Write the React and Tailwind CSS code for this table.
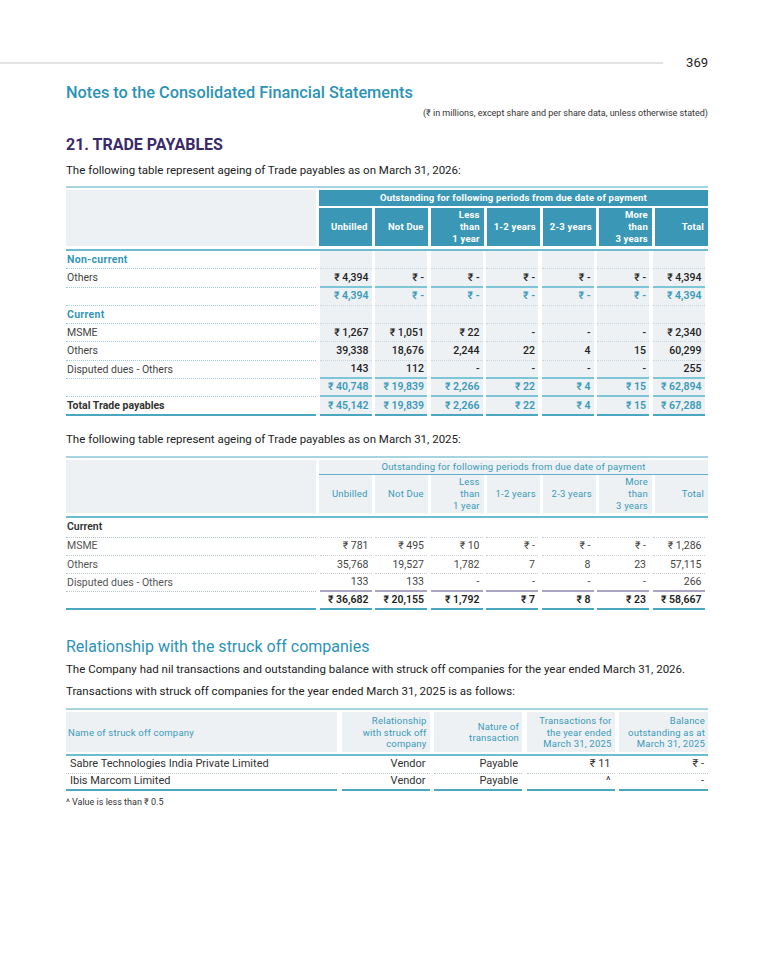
import React from "react";

const heads = [
  ["Unbilled"],
  ["Not Due"],
  ["Less", "than", "1 year"],
  ["1-2 years"],
  ["2-3 years"],
  ["More", "than", "3 years"],
  ["Total"],
];

const t1 = [
  { label: "Non-current", type: "section" },
  { label: "Others", vals: ["₹ 4,394", "₹ -", "₹ -", "₹ -", "₹ -", "₹ -", "₹ 4,394"], nextSub: true },
  { label: "", vals: ["₹ 4,394", "₹ -", "₹ -", "₹ -", "₹ -", "₹ -", "₹ 4,394"], type: "sub" },
  { label: "Current", type: "section" },
  { label: "MSME", vals: ["₹ 1,267", "₹ 1,051", "₹ 22", "-", "-", "-", "₹ 2,340"] },
  { label: "Others", vals: ["39,338", "18,676", "2,244", "22", "4", "15", "60,299"] },
  { label: "Disputed dues - Others", vals: ["143", "112", "-", "-", "-", "-", "255"], nextSub: true },
  { label: "", vals: ["₹ 40,748", "₹ 19,839", "₹ 2,266", "₹ 22", "₹ 4", "₹ 15", "₹ 62,894"], type: "sub", nextSub: true },
  { label: "Total Trade payables", vals: ["₹ 45,142", "₹ 19,839", "₹ 2,266", "₹ 22", "₹ 4", "₹ 15", "₹ 67,288"], type: "total" },
];

const t2 = [
  { label: "Current", type: "section" },
  { label: "MSME", vals: ["₹ 781", "₹ 495", "₹ 10", "₹ -", "₹ -", "₹ -", "₹ 1,286"] },
  { label: "Others", vals: ["35,768", "19,527", "1,782", "7", "8", "23", "57,115"] },
  { label: "Disputed dues - Others", vals: ["133", "133", "-", "-", "-", "-", "266"], nextSub: true },
  { label: "", vals: ["₹ 36,682", "₹ 20,155", "₹ 1,792", "₹ 7", "₹ 8", "₹ 23", "₹ 58,667"], type: "total" },
];

function HeadCell({ lines, solid }) {
  return (
    <div
      className={
        "h-[38px] flex items-center justify-end text-right pr-[4px] text-[9.5px] leading-[12px] tracking-[0.2px] " +
        (solid ? "bg-[#3a97b5] text-white font-bold" : "bg-[#edf1f4] text-[#3a9ab8]")
      }
    >
      <div>
        {lines.map((l, i) => (
          <div key={i}>{l}</div>
        ))}
      </div>
    </div>
  );
}

function Table1() {
  return (
    <div className="mt-[8px]">
      <div className="border-t-2 border-[#a6d5e1] pt-[2px]">
        <div className="flex gap-x-[3px]">
          <div className="w-[250px] bg-[#edf1f4]" />
          <div className="flex-1 flex flex-col gap-[2px]">
            <div className="h-[16px] bg-[#3a97b5] text-white font-bold text-[9.5px] tracking-[0.2px] flex items-center justify-center">
              Outstanding for following periods from due date of payment
            </div>
            <div className="grid grid-cols-7 gap-x-[3.5px]">
              {heads.map((h, i) => (
                <HeadCell key={i} lines={h} solid />
              ))}
            </div>
          </div>
        </div>
        <div className="mt-[3px] h-[2px] bg-[#6dbdd2]" />
      </div>
      <div className="grid grid-cols-[250px_repeat(7,52px)] gap-x-[3.5px]">
        {t1.map((r, ri) => (
          <React.Fragment key={ri}>
            <div
              className={
                "h-[18.3px] flex items-center pl-[1px] text-[10.5px] " +
                (r.type === "total"
                  ? "border-b-2 border-solid border-[#4aa6c1] font-bold text-[#333]"
                  : "border-b border-dotted border-[#9fcfdc] ") +
                (r.type === "section" ? "text-[#3597b6] font-bold tracking-[0.3px]" : r.type === "total" ? "" : "text-[#444]")
              }
            >
              {r.label}
            </div>
            {Array.from({ length: 7 }).map((_, ci) => {
              const v = r.vals ? r.vals[ci] : "";
              let border = "border-b border-dotted border-[#c9d7dd]";
              if (r.type === "total") border = "border-b-2 border-solid border-[#4aa6c1]";
              else if (r.nextSub) border = "border-b-2 border-solid border-[#7ec5d8]";
              const color =
                r.type === "sub" || r.type === "total" ? "text-[#3a9ab8] font-semibold" : "text-[#222] font-medium";
              return (
                <div
                  key={ci}
                  className={
                    "h-[18.3px] flex items-center justify-end pr-[3px] text-[10.5px] bg-[#edf1f4] " + border + " " + color
                  }
                >
                  {v}
                </div>
              );
            })}
          </React.Fragment>
        ))}
      </div>
    </div>
  );
}

function Table2() {
  return (
    <div className="mt-[9px]">
      <div className="border-t-2 border-[#a6d5e1] pt-[2px]">
        <div className="flex gap-x-[3px]">
          <div className="w-[250px] bg-[#edf1f4]" />
          <div className="flex-1 flex flex-col">
            <div className="h-[15px] bg-[#edf1f4] text-[#3a9ab8] text-[9.5px] tracking-[0.2px] flex items-center justify-center border-b-[1.5px] border-[#5cb3cb]">
              Outstanding for following periods from due date of payment
            </div>
            <div className="grid grid-cols-7 gap-x-[3.5px]">
              {heads.map((h, i) => (
                <HeadCell key={i} lines={h} />
              ))}
            </div>
          </div>
        </div>
        <div className="mt-[3px] h-[2px] bg-[#6dbdd2]" />
      </div>
      <div className="grid grid-cols-[250px_repeat(7,52px)] gap-x-[3.5px]">
        {t2.map((r, ri) => (
          <React.Fragment key={ri}>
            <div
              className={
                "flex items-center pl-[1px] text-[10.5px] " +
                (ri === 0 ? "h-[20px] " : "h-[18.2px] ") +
                (r.type === "total"
                  ? "border-b-2 border-solid border-[#4aa6c1]"
                  : "border-b border-dotted border-[#b9c6cc] ") +
                (r.type === "section" ? " text-[#333] font-semibold" : " text-[#555]")
              }
            >
              {r.label}
            </div>
            {Array.from({ length: 7 }).map((_, ci) => {
              const v = r.vals ? r.vals[ci] : "";
              let border = "border-b border-dotted border-[#c6cfd3]";
              if (r.type === "total") border = "border-b-2 border-solid border-[#4aa6c1]";
              else if (r.nextSub) border = "border-b-2 border-solid border-[#aaa4c2]";
              const color = r.type === "total" ? "text-[#222] font-semibold" : "text-[#444]";
              return (
                <div
                  key={ci}
                  className={
                    "flex items-center justify-end pr-[3px] text-[10.5px] " +
                    (ri === 0 ? "h-[20px] " : "h-[18.2px] ") +
                    border +
                    " " +
                    color
                  }
                >
                  {v}
                </div>
              );
            })}
          </React.Fragment>
        ))}
      </div>
    </div>
  );
}

const t3head = [
  { lines: ["Name of struck off company"], left: true },
  { lines: ["Relationship", "with struck off", "company"] },
  { lines: ["Nature of", "transaction"] },
  { lines: ["Transactions for", "the year ended", "March 31, 2025"] },
  { lines: ["Balance", "outstanding as at", "March 31, 2025"] },
];

const t3rows = [
  ["Sabre Technologies India Private Limited", "Vendor", "Payable", "₹ 11", "₹ -"],
  ["Ibis Marcom Limited", "Vendor", "Payable", "^", "-"],
];

function Table3() {
  return (
    <div className="mt-[6px]">
      <div className="border-t-2 border-[#a6d5e1] pt-[2px]">
        <div className="grid grid-cols-[271px_88px_88px_88px_89px] gap-x-[4.5px]">
          {t3head.map((h, i) => (
            <div
              key={i}
              className={
                "h-[40px] bg-[#edf1f4] text-[#3a9ab8] text-[9.5px] leading-[11.5px] tracking-[0.2px] flex items-center " +
                (h.left ? "justify-start pl-[2px]" : "justify-end text-right pr-[3px]")
              }
            >
              <div>
                {h.lines.map((l, j) => (
                  <div key={j}>{l}</div>
                ))}
              </div>
            </div>
          ))}
        </div>
        <div className="mt-[1.5px] h-[2px] bg-[#6dbdd2]" />
      </div>
      <div className="grid grid-cols-[271px_88px_88px_88px_89px] gap-x-[4.5px]">
        {t3rows.map((r, ri) => (
          <React.Fragment key={ri}>
            {r.map((c, ci) => (
              <div
                key={ci}
                className={
                  "flex items-center text-[11px] text-[#333] " +
                  (ri === 0 ? "h-[18px] " : "h-[17px] ") +
                  (ci === 0 ? "pl-[4px] " : "justify-end pr-[4px] ") +
                  (ri === t3rows.length - 1
                    ? "border-b-2 border-solid border-[#4aa6c1]"
                    : "border-b border-dotted border-[#b9c6cc]")
                }
              >
                {c}
              </div>
            ))}
          </React.Fragment>
        ))}
      </div>
      <div className="mt-[5px] text-[9px] leading-[12px] text-[#333]">^ Value is less than ₹ 0.5</div>
    </div>
  );
}

export default function App() {
  return (
    <div className="w-[773px] h-[960px] bg-white font-['Roboto','Noto_Sans',sans-serif] text-[#333] overflow-hidden">
      <div className="pt-[54px] flex items-center">
        <div className="flex-1 h-[2px] bg-[#e3e3e3]" />
        <div className="ml-[23px] mr-[65px] text-[13px] leading-[18px] text-[#222]">369</div>
      </div>
      <div className="pl-[66px] pr-[65px]">
        <div className="mt-[10px] text-[16.3px] leading-[22px] font-medium text-[#2b93b6]">
          Notes to the Consolidated Financial Statements
        </div>
        <div className="mt-[3px] text-right text-[9px] leading-[12px] text-[#333]">
          (₹ in millions, except share and per share data, unless otherwise stated)
        </div>
        <div className="mt-[16px] text-[16px] leading-[20px] font-bold text-[#3a2a6a]">21. TRADE PAYABLES</div>
        <div className="mt-[7px] text-[11.5px] leading-[16px] text-[#222]">
          The following table represent ageing of Trade payables as on March 31, 2026:
        </div>
        <Table1 />
        <div className="mt-[15px] text-[11.5px] leading-[16px] text-[#222]">
          The following table represent ageing of Trade payables as on March 31, 2025:
        </div>
        <Table2 />
        <div className="mt-[26px] text-[16px] leading-[22px] text-[#2b93b6]">
          Relationship with the struck off companies
        </div>
        <div className="mt-[0px] text-[11.5px] leading-[22px] text-[#222]">
          The Company had nil transactions and outstanding balance with struck off companies for the year ended March 31, 2026.
        </div>
        <div className="text-[11.5px] leading-[22px] text-[#222]">
          Transactions with struck off companies for the year ended March 31, 2025 is as follows:
        </div>
        <Table3 />
      </div>
    </div>
  );
}
